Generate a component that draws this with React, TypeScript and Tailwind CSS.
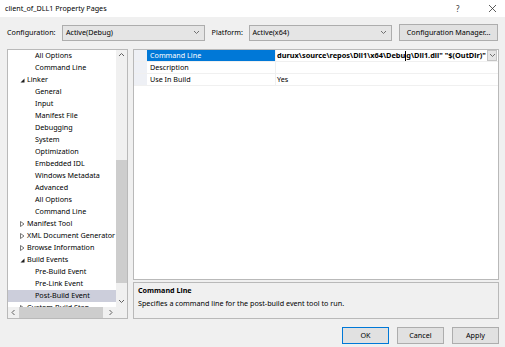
import React from 'react';

type TreeNode = { label: string; level: 1 | 2; state?: 'open' | 'closed'; selected?: boolean };

const tree: TreeNode[] = [
  { label: 'All Options', level: 2 },
  { label: 'Command Line', level: 2 },
  { label: 'Linker', level: 1, state: 'open' },
  { label: 'General', level: 2 },
  { label: 'Input', level: 2 },
  { label: 'Manifest File', level: 2 },
  { label: 'Debugging', level: 2 },
  { label: 'System', level: 2 },
  { label: 'Optimization', level: 2 },
  { label: 'Embedded IDL', level: 2 },
  { label: 'Windows Metadata', level: 2 },
  { label: 'Advanced', level: 2 },
  { label: 'All Options', level: 2 },
  { label: 'Command Line', level: 2 },
  { label: 'Manifest Tool', level: 1, state: 'closed' },
  { label: 'XML Document Generator', level: 1, state: 'closed' },
  { label: 'Browse Information', level: 1, state: 'closed' },
  { label: 'Build Events', level: 1, state: 'open' },
  { label: 'Pre-Build Event', level: 2 },
  { label: 'Pre-Link Event', level: 2 },
  { label: 'Post-Build Event', level: 2, selected: true },
  { label: 'Custom Build Step', level: 1, state: 'closed' },
];

function Chevron({ dir, color = '#606060' }: { dir: 'up' | 'down' | 'left' | 'right'; color?: string }) {
  const pts = {
    up: '1,4 3.5,1.5 6,4',
    down: '1,2 3.5,4.5 6,2',
    left: '4.5,1 2,3.5 4.5,6',
    right: '2.5,1 5,3.5 2.5,6',
  }[dir];
  return (
    <svg width="7" height="7" viewBox="0 0 7 7">
      <polyline points={pts} fill="none" stroke={color} strokeWidth="1" />
    </svg>
  );
}

function Expander({ state }: { state: 'open' | 'closed' }) {
  if (state === 'open') {
    return (
      <svg width="5" height="5" viewBox="0 0 5 5">
        <polygon points="4.5,0.5 4.5,4.5 0.5,4.5" fill="#1e1e1e" />
      </svg>
    );
  }
  return (
    <svg width="5" height="6" viewBox="0 0 5 6">
      <polygon points="0.5,0.5 4,3 0.5,5.5" fill="none" stroke="#555" strokeWidth="0.8" />
    </svg>
  );
}

function Combo({ value, width }: { value: string; width: string }) {
  return (
    <div className={`${width} h-[16px] border border-[#adadad] bg-[#e5e5e5] flex items-center pl-[3px] pr-[4px]`}>
      <span className="flex-1">{value}</span>
      <Chevron dir="down" color="#707070" />
    </div>
  );
}

function TreePanel() {
  return (
    <div className="w-[121px] h-full border border-[#b9b9b9] bg-white flex flex-col">
      <div className="flex flex-1 min-h-0">
        <div className="flex-1 overflow-hidden">
          {tree.map((n, i) => (
            <div
              key={i}
              className={`h-[12px] flex items-center whitespace-nowrap ${n.selected ? 'bg-[#cccedb]' : ''} ${
                n.level === 1 ? 'pl-[12px]' : 'pl-[27px]'
              }`}
            >
              {n.state && (
                <span className="w-[7px] flex items-center">
                  <Expander state={n.state} />
                </span>
              )}
              <span>{n.label}</span>
            </div>
          ))}
        </div>
        <div className="w-[11px] bg-[#f0f0f0] flex flex-col">
          <div className="h-[11px] flex items-center justify-center">
            <Chevron dir="up" />
          </div>
          <div className="flex-1">
            <div className="mt-[99px] h-[123px] bg-[#cdcdcd]" />
          </div>
          <div className="h-[11px] flex items-center justify-center">
            <Chevron dir="down" />
          </div>
        </div>
      </div>
      <div className="h-[11px] flex bg-[#f0f0f0]">
        <div className="w-[11px] flex items-center justify-center">
          <Chevron dir="left" />
        </div>
        <div className="flex-1 flex items-stretch">
          <div className="w-[84px] bg-[#cdcdcd]" />
        </div>
        <div className="w-[11px] flex items-center justify-center">
          <Chevron dir="right" />
        </div>
        <div className="w-[11px] bg-[#f0f0f0]" />
      </div>
    </div>
  );
}

function GridRow({ name, selected, children }: { name: string; selected?: boolean; children?: React.ReactNode }) {
  return (
    <div className="flex h-[12px] border-b border-[#f0f0f0]">
      <div className="w-[13px] bg-[#eef0f5]" />
      <div
        className={`w-[129px] pl-[3px] flex items-center border-r border-[#f0f0f0] ${
          selected ? 'bg-[#0078d7] text-white' : ''
        }`}
      >
        {name}
      </div>
      <div className="flex-1 min-w-0 flex items-center">{children}</div>
    </div>
  );
}

function PropertyGrid() {
  return (
    <div className="flex-1 min-h-0 border border-[#b9b9b9] bg-white">
      <GridRow name="Command Line" selected>
        <div className="flex-1 min-w-0 flex items-center whitespace-nowrap font-bold text-[7.4px] pl-[1px]">
          <span>{'durux\\source\\repos\\Dll1\\x64\\Debu'}</span>
          <span className="inline-block w-[1px] h-[10px] bg-black" />
          <span>{'g\\Dll1.dll" "$(OutDir)"'}</span>
        </div>
        <div className="w-[10px] h-[11px] border border-[#c4c4c4] bg-[#e5e5e5] flex items-center justify-center mr-[1px]">
          <Chevron dir="down" color="#707070" />
        </div>
      </GridRow>
      <GridRow name="Description" />
      <GridRow name="Use In Build">
        <span className="pl-[1px]">Yes</span>
      </GridRow>
    </div>
  );
}

function DialogButton({ label, primary }: { label: string; primary?: boolean }) {
  return (
    <button
      className={`w-[47px] h-[17px] bg-[#e1e1e1] border flex items-center justify-center ${
        primary ? 'border-[#0078d7]' : 'border-[#adadad]'
      }`}
    >
      {label}
    </button>
  );
}

export default function App() {
  return (
    <div className="w-[505px] h-[347px] bg-[#f0f0f0] text-black text-[7.2px] leading-none font-['Noto_Sans','Open_Sans',sans-serif] flex flex-col overflow-hidden">
      {/* Title bar */}
      <div className="h-[17px] bg-white flex items-center pl-[5px]">
        <span className="flex-1">client_of_DLL1 Property Pages</span>
        <span className="w-[10px] text-[8px] text-[#333] mr-[22px]">?</span>
        <svg width="9" height="9" viewBox="0 0 9 9" className="mr-[8px]">
          <path d="M1 1 L8 8 M8 1 L1 8" stroke="#333" strokeWidth="0.8" />
        </svg>
      </div>

      {/* Configuration row */}
      <div className="mt-[7px] h-[17px] flex items-center px-[7px]">
        <span className="w-[55px]">Configuration:</span>
        <Combo value="Active(Debug)" width="w-[143px]" />
        <span className="w-[44px] pl-[7px]">Platform:</span>
        <Combo value="Active(x64)" width="w-[144px]" />
        <button className="ml-[7px] w-[99px] h-[17px] bg-[#e1e1e1] border border-[#adadad] flex items-center justify-center">
          Configuration Manager...
        </button>
      </div>

      {/* Main area */}
      <div className="mt-[8px] h-[270px] flex gap-[5px] pl-[7px] pr-[6px]">
        <TreePanel />
        <div className="flex-1 flex flex-col gap-[2px]">
          <PropertyGrid />
          <div className="h-[37px] border border-[#b9b9b9] bg-[#f0f0f0] px-[4px] pt-[4px] flex flex-col gap-[6px]">
            <span className="font-bold">Command Line</span>
            <span>Specifies a command line for the post-build event tool to run.</span>
          </div>
        </div>
      </div>

      {/* Buttons */}
      <div className="mt-[8px] flex justify-end gap-[8px] pr-[6px]">
        <DialogButton label="OK" primary />
        <DialogButton label="Cancel" />
        <DialogButton label="Apply" />
      </div>
    </div>
  );
}
